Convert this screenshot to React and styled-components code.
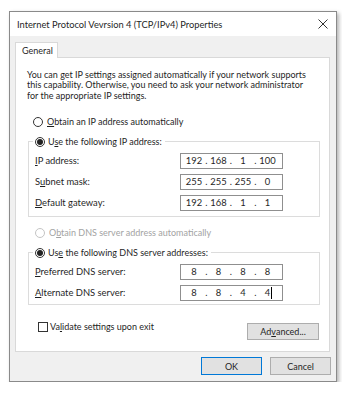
import styled, { createGlobalStyle, css } from "styled-components";

const GlobalStyle = createGlobalStyle`
    body {
        margin: 0;
        background: #fff;
        font-family: Lato, "Noto Sans", sans-serif;
        font-size: 9px;
        color: #1f1f1f;
    }
`;

const App = () => {
    return (
        <>
            <GlobalStyle />
            <Window>
                {/* Title bar */}
                <TitleBar>
                    <Title>Internet Protocol Vevrsion 4 (TCP/IPv4) Properties</Title>
                    <svg width="10" height="10" viewBox="0 0 10 10">
                        <path d="M0.5 0.5 L9.5 9.5 M9.5 0.5 L0.5 9.5" stroke="#333" strokeWidth="1" fill="none" />
                    </svg>
                </TitleBar>

                <Body>
                    {/* Tabs */}
                    <Tab>General</Tab>

                    <Panel>
                        <Intro>
                            You can get IP settings assigned automatically if your network supports<br />
                            this capability. Otherwise, you need to ask your network administrator<br />
                            for the appropriate IP settings.
                        </Intro>

                        <RadioRow $top={15} $indent={5}>
                            <Radio />
                            <span><u>O</u>btain an IP address automatically</span>
                        </RadioRow>

                        {/* Static IP group */}
                        <Group>
                            <Legend>
                                <Radio $checked />
                                <span>U<u>s</u>e the following IP address:</span>
                            </Legend>
                            <Rows>
                                <FieldRow>
                                    <FieldLabel><u>I</u>P address:</FieldLabel>
                                    <IpInput parts={["192", "168", "1", "100"]} />
                                </FieldRow>
                                <FieldRow>
                                    <FieldLabel>S<u>u</u>bnet mask:</FieldLabel>
                                    <IpInput parts={["255", "255", "255", "0"]} />
                                </FieldRow>
                                <FieldRow>
                                    <FieldLabel><u>D</u>efault gateway:</FieldLabel>
                                    <IpInput parts={["192", "168", "1", "1"]} />
                                </FieldRow>
                            </Rows>
                        </Group>

                        <RadioRow $top={10} $indent={7} $disabled>
                            <Radio $disabled />
                            <span>O<u>b</u>tain DNS server address automatically</span>
                        </RadioRow>

                        {/* DNS group */}
                        <Group $bottom={3}>
                            <Legend>
                                <Radio $checked />
                                <span>Us<u>e</u> the following DNS server addresses:</span>
                            </Legend>
                            <Rows>
                                <FieldRow>
                                    <FieldLabel><u>P</u>referred DNS server:</FieldLabel>
                                    <IpInput parts={["8", "8", "8", "8"]} />
                                </FieldRow>
                                <FieldRow>
                                    <FieldLabel><u>A</u>lternate DNS server:</FieldLabel>
                                    <IpInput parts={["8", "8", "4", "4"]} caret />
                                </FieldRow>
                            </Rows>
                        </Group>

                        <OptionsRow>
                            <CheckLabel>
                                <CheckBox />
                                <span>Va<u>l</u>idate settings upon exit</span>
                            </CheckLabel>
                            <SmallButton>Ad<u>v</u>anced...</SmallButton>
                        </OptionsRow>
                    </Panel>

                    <Footer>
                        <DialogButton $primary>OK</DialogButton>
                        <DialogButton>Cancel</DialogButton>
                    </Footer>
                </Body>
            </Window>
        </>
    );
};

const IpInput = ({ parts, caret }) => (
    <IpBox>
        {parts.map((p, i) => (
            <IpSegment key={i}>
                <IpField>
                    {p}
                    {caret && i === parts.length - 1 && <Caret />}
                </IpField>
                {i < parts.length - 1 && <IpDot>.</IpDot>}
            </IpSegment>
        ))}
    </IpBox>
);

export default App;

// Styled Components
const Window = styled.div`
    margin: 11px 0 0 9px;
    width: 328px;
    height: 371px;
    box-sizing: border-box;
    border: 1px solid #8a8a8a;
    box-shadow: 2px 2px 4px rgba(0, 0, 0, 0.3);
    background: #f0f0f0;
    display: flex;
    flex-direction: column;
`;

const TitleBar = styled.div`
    height: 24px;
    background: #fff;
    display: flex;
    align-items: center;
    justify-content: space-between;
    padding: 0 8px 0 7px;
`;

const Title = styled.span`
    font-size: 9.3px;
    color: #1f1f1f;
`;

const Body = styled.div`
    padding: 6px 0 0 5px;
    display: flex;
    flex-direction: column;
`;

const Tab = styled.div`
    width: 43px;
    height: 16px;
    box-sizing: border-box;
    border: 1px solid #d9d9d9;
    border-bottom: none;
    background: #fff;
    margin-bottom: -1px;
    padding-left: 6px;
    line-height: 15px;
    position: relative;
    z-index: 1;
`;

const Panel = styled.div`
    width: 315px;
    height: 295px;
    box-sizing: border-box;
    border: 1px solid #d9d9d9;
    background: #fff;
    padding: 12px 9px 0 12px;
`;

const Intro = styled.p`
    margin: 0 0 0 -1px;
    line-height: 10.3px;
    white-space: nowrap;
`;

const RadioRow = styled.div(
    (props) => css`
        display: flex;
        align-items: center;
        gap: 4px;
        height: 12px;
        margin-top: ${props.$top}px;
        margin-left: ${props.$indent}px;
        color: ${props.$disabled ? "#a3a3a3" : "inherit"};
    `
);

const Radio = styled.span(
    (props) => css`
        width: 10px;
        height: 10px;
        box-sizing: border-box;
        border-radius: 50%;
        border: 1px solid ${props.$disabled ? "#c4c4c4" : "#333"};
        background: #fff;
        display: flex;
        align-items: center;
        justify-content: center;
        flex-shrink: 0;
        &::after {
            content: "";
            width: 6px;
            height: 6px;
            border-radius: 50%;
            background: ${props.$checked ? "#222" : "transparent"};
        }
    `
);

const Group = styled.fieldset(
    (props) => css`
        margin: 8px 0 0 0;
        border: 1px solid #dcdcdc;
        padding: 0 0 ${props.$bottom ?? 5}px 6px;
        min-inline-size: 0;
    `
);

const Legend = styled.legend`
    display: flex;
    align-items: center;
    gap: 3px;
    padding: 0 3px 0 2px;
    margin-left: -2px;
    line-height: 12px;
`;

const Rows = styled.div`
    display: flex;
    flex-direction: column;
    gap: 5px;
    padding-top: 5px;
`;

const FieldRow = styled.div`
    display: flex;
    align-items: center;
    height: 16px;
`;

const FieldLabel = styled.span`
    width: 145px;
    font-size: 9.4px;
`;

const IpBox = styled.div`
    width: 103px;
    height: 16px;
    box-sizing: border-box;
    border: 1px solid #8f8f8f;
    display: flex;
    align-items: center;
    padding-left: 3px;
    font-size: 9.4px;
`;

const IpSegment = styled.div`
    display: flex;
    align-items: center;
`;

const IpField = styled.span`
    width: 20px;
    display: flex;
    align-items: center;
    justify-content: center;
`;

const IpDot = styled.span`
    width: 4.5px;
    text-align: center;
`;

const Caret = styled.span`
    display: inline-block;
    width: 1px;
    height: 12px;
    background: #000;
    margin-left: 1px;
    margin-right: -2px;
`;

const OptionsRow = styled.div`
    margin-top: 17px;
    display: flex;
    justify-content: space-between;
    align-items: flex-start;
    padding: 0 1px 0 10px;
`;

const CheckLabel = styled.label`
    display: flex;
    align-items: center;
    gap: 2px;
    height: 10px;
`;

const CheckBox = styled.span`
    width: 10px;
    height: 10px;
    box-sizing: border-box;
    border: 1px solid #333;
    background: #fff;
`;

const SmallButton = styled.div`
    margin-top: 1px;
    width: 72px;
    height: 17px;
    box-sizing: border-box;
    background: #e1e1e1;
    border: 1px solid #adadad;
    display: flex;
    align-items: center;
    justify-content: center;
`;

const Footer = styled.div`
    display: flex;
    justify-content: flex-end;
    gap: 8px;
    padding: 5px 5px 0 0;
`;

const DialogButton = styled.div(
    (props) => css`
        width: 61px;
        height: 18px;
        box-sizing: border-box;
        background: #e1e1e1;
        border: 1px solid ${props.$primary ? "#0078d7" : "#adadad"};
        display: flex;
        align-items: center;
        justify-content: center;
    `
);
